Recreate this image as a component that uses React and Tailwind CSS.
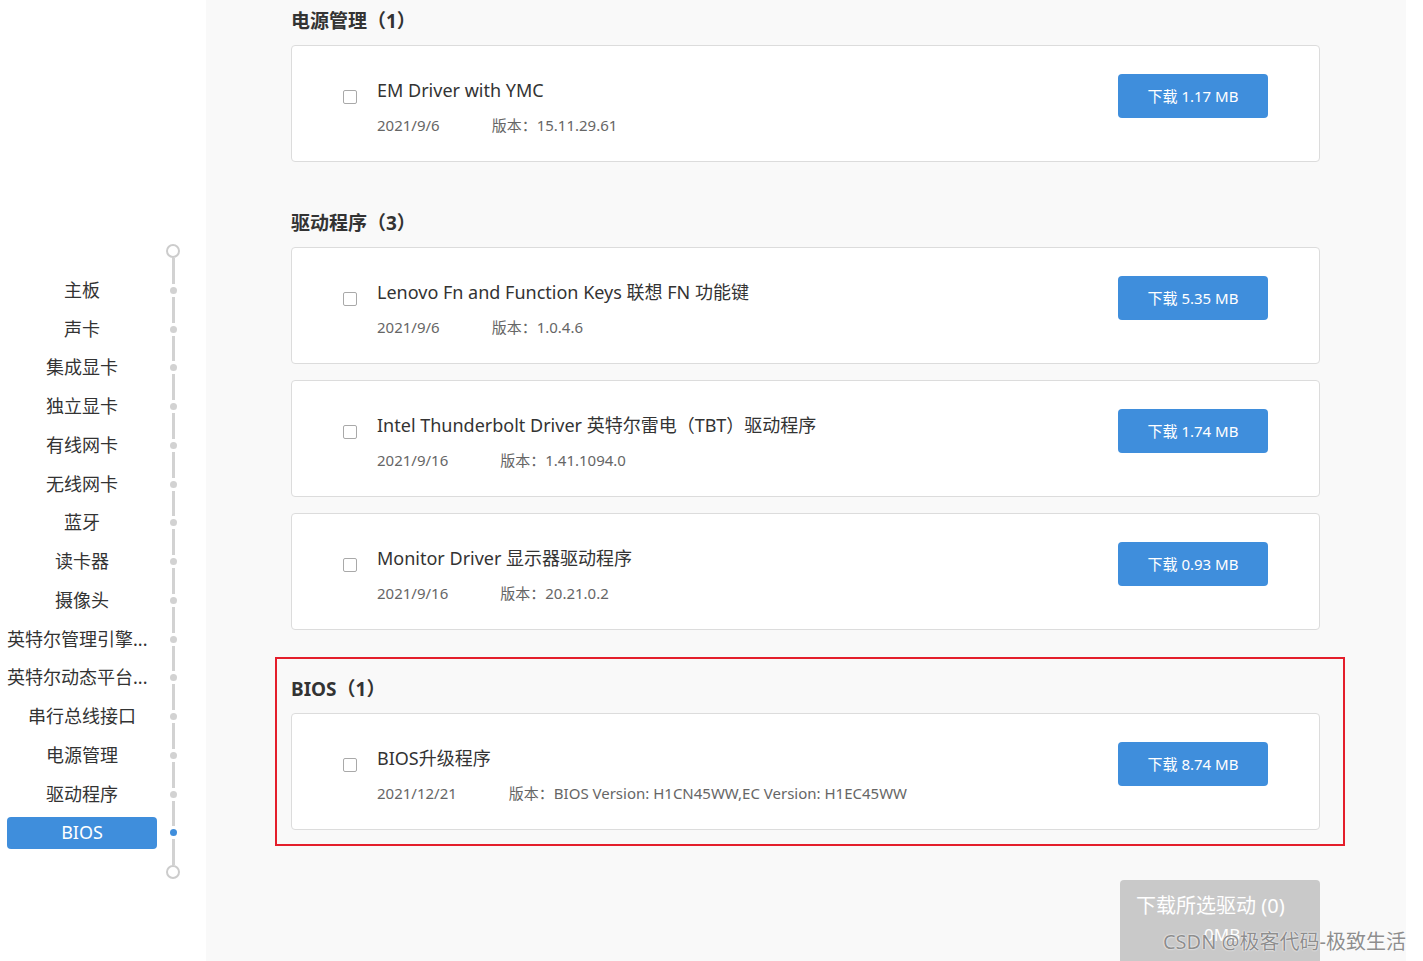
import React from "react";

const navItems = [
  "主板",
  "声卡",
  "集成显卡",
  "独立显卡",
  "有线网卡",
  "无线网卡",
  "蓝牙",
  "读卡器",
  "摄像头",
  "英特尔管理引擎...",
  "英特尔动态平台...",
  "串行总线接口",
  "电源管理",
  "驱动程序",
  "BIOS",
];

const sections = [
  {
    title: "电源管理（1）",
    items: [
      { name: "EM Driver with YMC", date: "2021/9/6", ver: "15.11.29.61", size: "1.17 MB" },
    ],
  },
  {
    title: "驱动程序（3）",
    items: [
      { name: "Lenovo Fn and Function Keys 联想 FN 功能键", date: "2021/9/6", ver: "1.0.4.6", size: "5.35 MB" },
      { name: "Intel Thunderbolt Driver 英特尔雷电（TBT）驱动程序", date: "2021/9/16", ver: "1.41.1094.0", size: "1.74 MB" },
      { name: "Monitor Driver 显示器驱动程序", date: "2021/9/16", ver: "20.21.0.2", size: "0.93 MB" },
    ],
  },
];

const bios = {
  title: "BIOS（1）",
  items: [
    { name: "BIOS升级程序", date: "2021/12/21", ver: "BIOS Version: H1CN45WW,EC Version: H1EC45WW", size: "8.74 MB" },
  ],
};

function Card({ item }) {
  return (
    <div className="flex h-[117px] items-start rounded-[4px] border border-[#dcdcdc] bg-white pl-[51px] pr-[51px] pt-[28px]">
      <div className="mt-[16px] h-[14px] w-[14px] shrink-0 rounded-[2px] border border-[#a9a9a9] bg-white" />
      <div className="ml-[20px] mt-[3px] flex-1">
        <div className="h-[26px] text-[18px] leading-[26px] text-[#333]">{item.name}</div>
        <div className="mt-[11px] flex h-[22px] text-[15px] leading-[22px] text-[#666]">
          <span>{item.date}</span>
          <span className="ml-[52px]">版本：{item.ver}</span>
        </div>
      </div>
      <button className="h-[44px] w-[150px] shrink-0 rounded-[4px] bg-[#3f8edc] text-[15px] text-white">
        下载 {item.size}
      </button>
    </div>
  );
}

function Section({ section }) {
  return (
    <div>
      <div className="mb-[9px] h-[30px] text-[19px] font-bold leading-[30px] text-[#333]">{section.title}</div>
      <div className="flex flex-col gap-[16px]">
        {section.items.map((it) => (
          <Card key={it.name} item={it} />
        ))}
      </div>
    </div>
  );
}

export default function App() {
  return (
    <div
      className="relative flex h-[961px] w-full overflow-hidden bg-white"
      style={{ fontFamily: '"Noto Sans", "Noto Sans CJK SC", sans-serif' }}
    >
      {/* Sidebar */}
      <div className="w-[206px] shrink-0 bg-white pt-[244px]">
        <div className="flex">
          <div className="w-[166px]" />
          <div className="flex w-[14px] flex-col items-center">
            <div className="h-[14px] w-[14px] rounded-full border-2 border-[#cccccc] bg-white" />
            <div className="h-[13px] w-[3px] bg-[#d2d2d2]" />
          </div>
        </div>
        {navItems.map((label) => {
          const active = label === "BIOS";
          const long = label.endsWith("...");
          return (
            <div key={label} className="flex h-[38.75px] items-center">
              <div className="w-[7px]" />
              <div
                className={
                  active
                    ? "flex h-[32px] w-[150px] items-center justify-center rounded-[4px] bg-[#3f8edc] text-[18px] text-white"
                    : long
                    ? "flex h-[32px] w-[150px] items-center justify-start whitespace-nowrap text-[18px] text-[#333]"
                    : "flex h-[32px] w-[150px] items-center justify-center whitespace-nowrap text-[18px] text-[#333]"
                }
              >
                {label}
              </div>
              <div className="w-[9px]" />
              <div className="flex h-full w-[14px] flex-col items-center">
                <div className="w-[3px] flex-1 bg-[#d2d2d2]" />
                <div className={active ? "my-[3px] h-[7px] w-[7px] rounded-full bg-[#3f8edc]" : "my-[3px] h-[7px] w-[7px] rounded-full bg-[#d2d2d2]"} />
                <div className="w-[3px] flex-1 bg-[#d2d2d2]" />
              </div>
            </div>
          );
        })}
        <div className="flex">
          <div className="w-[166px]" />
          <div className="flex w-[14px] flex-col items-center">
            <div className="h-[13px] w-[3px] bg-[#d2d2d2]" />
            <div className="h-[14px] w-[14px] rounded-full border-2 border-[#cccccc] bg-white" />
          </div>
        </div>
      </div>

      {/* Main */}
      <div className="w-[1200px] shrink-0 bg-[#f9f9f9] pl-[85px] pr-[86px] pt-[6px]">
        <Section section={sections[0]} />
        <div className="mt-[46px]">
          <Section section={sections[1]} />
        </div>
        <div className="ml-[-16px] mr-[-25px] mt-[27px] border-2 border-[#e41e2b] pb-[14px] pl-[14px] pr-[23px] pt-[15px]">
          <Section section={bios} />
        </div>
        <div className="mt-[34px] flex justify-end">
          <div className="h-[100px] w-[200px] rounded-[4px] bg-[#c9c9c9] pl-[16px] pt-[13px] text-white">
            <div className="text-[20px] leading-[26px]">下载所选驱动 (0)</div>
            <div className="ml-[68px] mt-[4px] text-[17px] leading-[24px]">0MB</div>
          </div>
        </div>
      </div>

      <div className="flex-1 bg-white" />

      <div className="absolute right-[17px] top-[928px] text-[20px] leading-[28px] text-[#8e8e8e] [text-shadow:0_0_2px_#ffffff,0_0_1px_#ffffff]">
        CSDN @极客代码-极致生活
      </div>
    </div>
  );
}
